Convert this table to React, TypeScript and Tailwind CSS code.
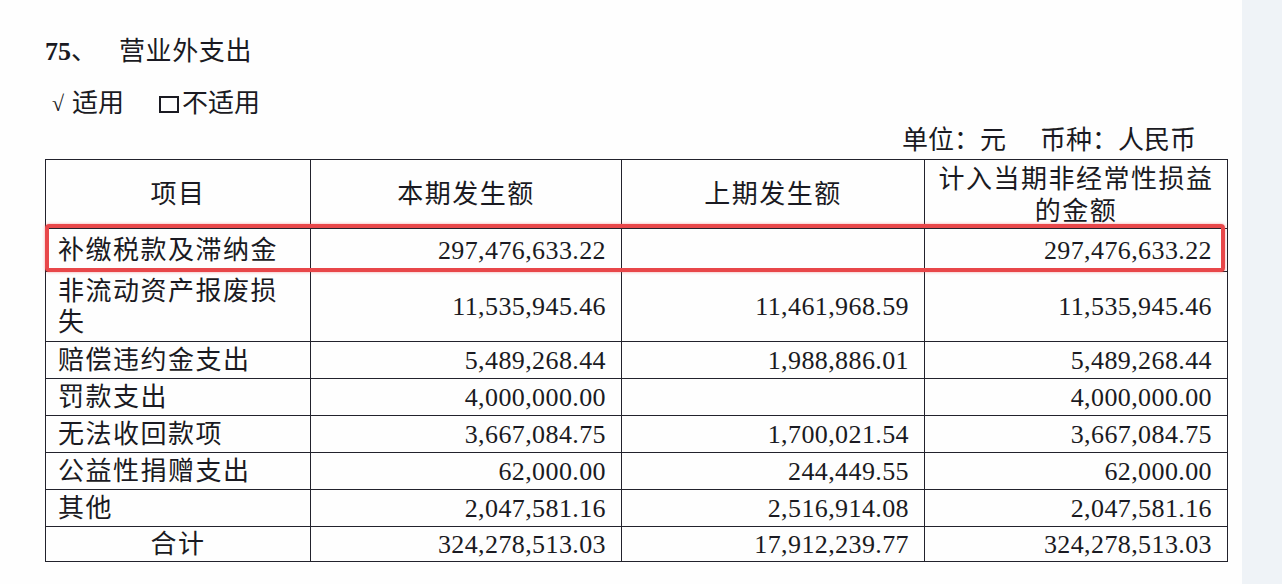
const font = "[font-family:'Liberation_Serif','Noto_Sans_CJK_SC',serif]";

type Row = {
  name: React.ReactNode;
  cur: string;
  prev: string;
  nonRec: string;
  h: string;
  center?: boolean;
};

const rows: Row[] = [
  { name: "补缴税款及滞纳金", cur: "297,476,633.22", prev: "", nonRec: "297,476,633.22", h: "h-[43px]" },
  {
    name: (
      <>
        非流动资产报废损
        <br />失
      </>
    ),
    cur: "11,535,945.46",
    prev: "11,461,968.59",
    nonRec: "11,535,945.46",
    h: "h-[70px]",
  },
  { name: "赔偿违约金支出", cur: "5,489,268.44", prev: "1,988,886.01", nonRec: "5,489,268.44", h: "h-[37px]" },
  { name: "罚款支出", cur: "4,000,000.00", prev: "", nonRec: "4,000,000.00", h: "h-[37px]" },
  { name: "无法收回款项", cur: "3,667,084.75", prev: "1,700,021.54", nonRec: "3,667,084.75", h: "h-[37px]" },
  { name: "公益性捐赠支出", cur: "62,000.00", prev: "244,449.55", nonRec: "62,000.00", h: "h-[37px]" },
  { name: "其他", cur: "2,047,581.16", prev: "2,516,914.08", nonRec: "2,047,581.16", h: "h-[37px]" },
  { name: "合计", cur: "324,278,513.03", prev: "17,912,239.77", nonRec: "324,278,513.03", h: "h-[35px]", center: true },
];

const cell = "border border-[#22222c] p-0 leading-[31px]";

function App() {
  return (
    <div className={`flex h-[584px] w-[1282px] overflow-hidden bg-white text-[#1a1a22] ${font}`}>
      <div className="w-[1242px] shrink-0 bg-[#fefefe] pl-[45px] pt-[36px]">
        {/* Title */}
        <div className="flex h-[32px] items-center text-[26px] leading-[32px]">
          <span className="font-bold">75</span>
          <span>、</span>
          <span className="ml-[22px] tracking-[0.6px]">营业外支出</span>
        </div>

        {/* applicable */}
        <div className="mt-[20px] flex h-[32px] items-center pl-[7px] text-[26px] leading-[32px]">
          <span className="text-[22px]">√</span>
          <span className="ml-[8px]">适用</span>
          <span className="ml-[35px] inline-block h-[17px] w-[20px] border-2 border-[#1a1a22]" />
          <span className="ml-[3px]">不适用</span>
        </div>

        {/* unit */}
        <div className="mt-[5px] flex h-[32px] w-[1182px] items-center justify-end pr-[31px] text-[26px] leading-[32px]">
          <span>单位：元</span>
          <span className="ml-[34px]">币种：人民币</span>
        </div>

        {/* table */}
        <div className="relative mt-[2px] w-[1182px]">
          <table className="w-[1182px] table-fixed border-collapse text-[26px]">
            <colgroup>
              <col className="w-[265px]" />
              <col className="w-[311px]" />
              <col className="w-[303px]" />
              <col className="w-[303px]" />
            </colgroup>
            <thead>
              <tr className="h-[67px]">
                <th className={`${cell} text-center font-normal tracking-[1.5px]`}>项目</th>
                <th className={`${cell} text-center font-normal tracking-[1.5px]`}>本期发生额</th>
                <th className={`${cell} text-center font-normal tracking-[1.5px]`}>上期发生额</th>
                <th className={`${cell} pt-[4px] text-center align-top font-normal !leading-[32px] tracking-[1.5px]`}>
                  计入当期非经常性损益
                  <br />
                  的金额
                </th>
              </tr>
            </thead>
            <tbody>
              {rows.map((r, i) => (
                <tr key={i} className={r.h}>
                  <td className={`${cell} tracking-[1.5px] ${r.center ? "text-center" : "pl-[12px] text-left"}`}>
                    {r.name}
                  </td>
                  <td className={`${cell} pr-[15px] text-right tracking-[0.4px]`}>{r.cur}</td>
                  <td className={`${cell} pr-[15px] text-right tracking-[0.4px]`}>{r.prev}</td>
                  <td className={`${cell} pr-[15px] text-right tracking-[0.4px]`}>{r.nonRec}</td>
                </tr>
              ))}
            </tbody>
          </table>

          {/* highlight box */}
          <div className="pointer-events-none absolute left-0 top-[65px] h-[48px] w-[1180px] rounded-[4px] border-4 border-[#e8474a] shadow-[0_0_3px_rgba(232,71,74,0.5)]" />
        </div>
      </div>
      <div className="flex-1 bg-[#eff3f7]" />
    </div>
  );
}

export default App;
